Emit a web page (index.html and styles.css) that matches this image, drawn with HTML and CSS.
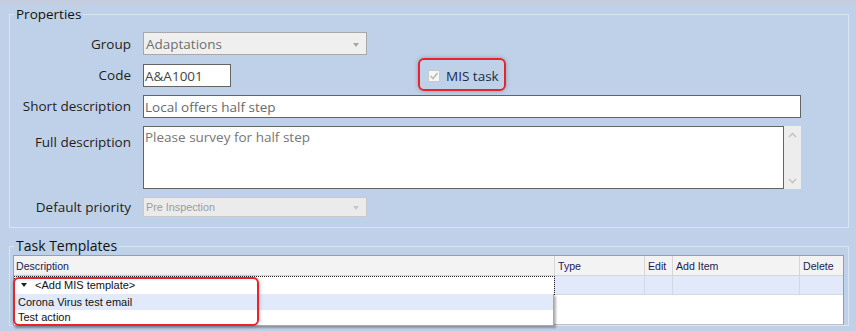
FILE: index.html
```html
<!DOCTYPE html>
<html lang="en">
  <head>
    <title>Task type</title>
    <link rel="stylesheet" href="styles.css">
  </head>
  <body>
    <div class="topbar"></div>

    <!-- Properties -->
    <fieldset class="group group-props">
      <legend>Properties</legend>
      <div class="form">
        <label class="lbl">Group</label>
        <div class="combo combo-group">
          <span>Adaptations</span>
          <span class="caret"></span>
        </div>

        <label class="lbl">Code</label>
        <div class="code-field">
          <input type="text" class="txt txt-code" value="A&amp;A1001">
          <label class="mis">
            <span class="chk">
              <svg width="10" height="10" viewBox="0 0 10 10"><polyline points="1.5,5 4,7.5 8.5,2" fill="none" stroke="#b9b9b9" stroke-width="1.6"/></svg>
            </span>
            MIS task
            <span class="callout callout-mis"></span>
          </label>
        </div>

        <label class="lbl">Short description</label>
        <input type="text" class="txt txt-wide" value="Local offers half step">

        <label class="lbl lbl-top">Full description</label>
        <div class="memo">
          <div class="memo-text">Please survey for half step</div>
          <div class="vscroll">
            <svg width="9" height="6" viewBox="0 0 9 6"><polyline points="1,5 4.5,1.5 8,5" fill="none" stroke="#c4c4c4" stroke-width="1.6"/></svg>
            <svg width="9" height="6" viewBox="0 0 9 6"><polyline points="1,1 4.5,4.5 8,1" fill="none" stroke="#c4c4c4" stroke-width="1.6"/></svg>
          </div>
        </div>

        <label class="lbl">Default priority</label>
        <div class="combo combo-priority">
          <span>Pre Inspection</span>
          <span class="caret"></span>
        </div>
      </div>
    </fieldset>

    <!-- Task Templates -->
    <fieldset class="group group-tasks">
      <legend>Task Templates</legend>
      <div class="grid">
        <div class="grid-line grid-head">
          <div class="cell">Description</div>
          <div class="cell">Type</div>
          <div class="cell">Edit</div>
          <div class="cell">Add Item</div>
          <div class="cell">Delete</div>
        </div>
        <div class="grid-line grid-row">
          <div class="cell cell-editor">
            <span class="dd-arrow"></span>
            &lt;Add MIS template&gt;
          </div>
          <div class="cell"></div>
          <div class="cell"></div>
          <div class="cell"></div>
          <div class="cell"></div>
        </div>

        <ul class="dropdown">
          <li class="hot">Corona Virus test email</li>
          <li>Test action</li>
        </ul>
        <span class="callout callout-dd"></span>
      </div>
    </fieldset>
  </body>
</html>
```

FILE: styles.css
```css
html, body { margin: 0; padding: 0; }
body {
  width: 856px;
  height: 331px;
  overflow: hidden;
  background: #bfd1e8;
  font-family: "Open Sans", "Liberation Sans", Arial, sans-serif;
  font-size: 13.5px;
  color: #1e1e1e;
}

.topbar { height: 5px; background: #c4cee0; }

/* Group boxes */
.group {
  border: 1px solid #dbe4f1;
  margin: 1px 7px 0 9px;
  padding: 0 0 10px 0;
  min-width: 0;
}
.group legend {
  margin-left: 4px;
  padding: 0 2px;
  font-size: 13.5px;
  line-height: 16px;
  color: #111;
}
.group-tasks { margin-top: 10px; padding: 1px 4px 0 3px; }
.group-tasks legend { font-size: 14px; margin-left: 1px; }

/* Properties form */
.form {
  display: grid;
  grid-template-columns: 121px 658px;
  grid-template-rows: 24px 23px 23px 63px 20px;
  column-gap: 12px;
  row-gap: 8px;
  margin-top: 10px;
}
.lbl {
  justify-self: end;
  align-self: center;
  line-height: 16px;
  margin-top: -1px;
}
.lbl-top { align-self: start; margin-top: 8px; }

.combo {
  position: relative;
  box-sizing: border-box;
  width: 224px;
  display: flex;
  align-items: center;
  padding-left: 2px;
}
.combo-group {
  height: 23px;
  background: #efefef;
  border: 1px solid #a8a8a8;
  color: #707070;
}
.combo-priority {
  height: 20px;
  background: #ebebeb;
  border: 1px solid #c9c9c9;
  color: #9c9c9c;
  font-family: "Liberation Sans", Arial, sans-serif;
  font-size: 10.8px;
}
.caret {
  position: absolute;
  right: 7px;
  top: 50%;
  margin-top: -1px;
  border-left: 3.5px solid transparent;
  border-right: 3.5px solid transparent;
  border-top: 4px solid #a6a6a6;
}
.combo-priority .caret { border-top-color: #c6c6c6; }

.txt {
  box-sizing: border-box;
  height: 23px;
  margin: 0;
  padding: 0 0 0 1px;
  border: 1px solid #646464;
  background: #fff;
  font-family: inherit;
  font-size: 13.5px;
  outline: none;
}
.txt-code { width: 88px; color: #454545; }
.txt-wide { width: 658px; color: #6a6a6a; }

.code-field { display: flex; align-items: center; }
.mis {
  position: relative;
  display: flex;
  align-items: center;
  margin-left: 197px;
  line-height: 16px;
  color: #1d2b4c;
}
.chk {
  box-sizing: border-box;
  width: 12px;
  height: 12px;
  margin-right: 6px;
  border: 1px solid #c9c9c9;
  background: #f6f6f6;
  display: flex;
  align-items: center;
  justify-content: center;
}

.memo { display: flex; height: 63px; }
.memo-text {
  box-sizing: border-box;
  width: 641px;
  height: 63px;
  border: 1px solid #646464;
  background: #fff;
  padding: 1px 1px;
  color: #777;
}
.vscroll {
  width: 17px;
  background: #ededed;
  display: flex;
  flex-direction: column;
  align-items: center;
  justify-content: space-between;
  padding: 6px 0 5px;
  box-sizing: border-box;
}

/* Annotation frames */
.callout {
  position: absolute;
  box-sizing: border-box;
  border: 2px solid #e8232b;
  border-radius: 6px;
  box-shadow: 0 0 4px rgba(40, 50, 90, 0.35);
  pointer-events: none;
}
.callout-mis { top: -10px; left: -10px; right: -7px; bottom: -7px; }
.callout-dd { top: 21px; left: -1px; width: 246px; height: 49px; }

/* Task templates grid */
.grid {
  position: relative;
  height: 70px;
  box-sizing: border-box;
  border: 1px solid #9d9d9d;
  border-bottom-color: #c0c0c0;
  background: #fff;
  font-family: "Liberation Sans", Arial, sans-serif;
  font-size: 10.6px;
}
.grid-line {
  display: grid;
  grid-template-columns: 541px 90px 28px 127px 1fr;
}
.cell {
  box-sizing: border-box;
  border-right: 1px solid #d3d8e1;
  border-bottom: 1px solid #d3d8e1;
  padding-left: 3px;
  display: flex;
  align-items: center;
  white-space: nowrap;
}
.cell:last-child { border-right: none; }
.grid-head .cell {
  height: 20px;
  background: #f3f3f3;
  border-color: #d6d6d6;
  color: #1b1b55;
}
.grid-head .cell:first-child { padding-left: 2px; }
.grid-row .cell { height: 19px; background: #e1e9fb; }
.grid-row .cell-editor {
  background: #fff;
  outline: 1px dotted #222;
  outline-offset: -1px;
  padding-left: 7px;
  color: #111;
  font-size: 11px;
}
.dd-arrow {
  width: 0;
  height: 0;
  margin-right: 8px;
  border-left: 3.5px solid transparent;
  border-right: 3.5px solid transparent;
  border-top: 4px solid #222;
}

.dropdown {
  position: absolute;
  top: 38px;
  left: -1px;
  width: 541px;
  margin: 0;
  padding: 0;
  list-style: none;
  box-sizing: border-box;
  border: 1px solid #a9a9a9;
  border-top: none;
  background: #fff;
  box-shadow: 2px 2px 2px rgba(0, 0, 0, 0.3);
  color: #111;
  font-size: 11px;
}
.dropdown li { height: 15px; line-height: 15px; padding-left: 4px; }
.dropdown li.hot { height: 16px; line-height: 16px; background: #e1e9fb; }
```
